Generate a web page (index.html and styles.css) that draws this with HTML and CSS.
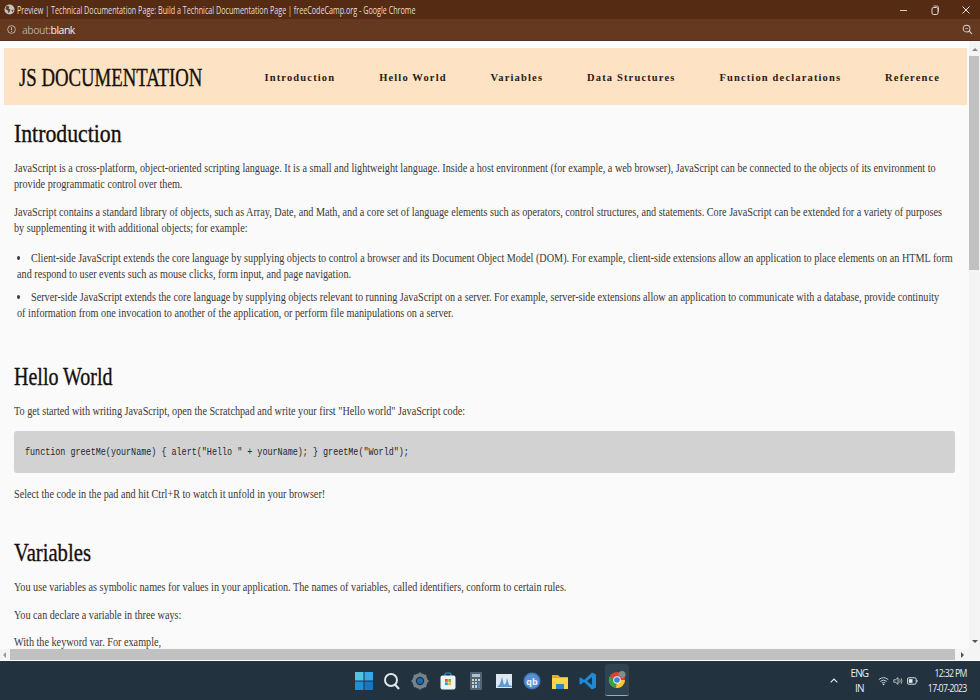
FILE: index.html
```html
<!DOCTYPE html>
<html lang="en">
<head>
<meta charset="utf-8">
<title>Preview</title>
<link rel="stylesheet" href="styles.css">
</head>
<body>
<div class="window">
  <div class="titlebar">
    <svg class="globe" viewBox="0 0 12 12" width="11" height="11"><circle cx="6" cy="6" r="5.5" fill="#c9c3bf"/><path d="M3 1.5l3 1.5-1 2 2 1-1 2.5-1 1.500-1-3-2.500-1.500zM8 7l2.500-1-1 3z" fill="#5a4030"/></svg>
    <span class="title"><span class="title-text">Preview | Technical Documentation Page: Build a Technical Documentation Page | freeCodeCamp.org - Google Chrome</span></span>
    <div class="winctl">
      <svg viewBox="0 0 10 10" width="10" height="10"><path d="M1 5.500h7" stroke="#d8d0ca" stroke-width="1"/></svg>
      <svg viewBox="0 0 10 10" width="10" height="10"><rect x="2" y="2.500" width="6" height="7" rx="1.500" fill="none" stroke="#e2dbd6"/><path d="M3.500 1h3.500q1.500 0 1.500 1.500v4" fill="none" stroke="#e2dbd6" stroke-width=".8"/></svg>
      <svg viewBox="0 0 10 10" width="10" height="10"><path d="M1.500 1.500l7 7M8.500 1.500l-7 7" stroke="#ece6e2" stroke-width="1"/></svg>
    </div>
  </div>
  <div class="addressbar">
    <svg viewBox="0 0 10 10" width="9" height="9"><circle cx="5" cy="5" r="4.300" fill="none" stroke="#cfc4bc" stroke-width=".9"/><path d="M5 2.500v3.300M5 6.800v1" stroke="#cfc4bc" stroke-width="1"/></svg>
    <span class="url"><span class="scheme">about:</span>blank</span>
    <svg class="zoomicon" viewBox="0 0 12 12" width="11" height="11"><circle cx="5" cy="5" r="3.700" fill="none" stroke="#d8cfc8" stroke-width="1.100"/><path d="M7.800 7.800l3 3" stroke="#d8cfc8" stroke-width="1.300"/><path d="M3.500 5h3" stroke="#d8cfc8" stroke-width=".8"/></svg>
  </div>

  <div class="viewport">
    <div class="page">
      <header class="topnav">
        <h1 class="logo"><span class="squeeze">JS DOCUMENTATION</span></h1>
        <nav class="links">
          <a>Introduction</a><a>Hello World</a><a>Variables</a><a>Data Structures</a><a>Function declarations</a><a>Reference</a>
        </nav>
      </header>
      <main class="doc">
        <section class="sec">
          <h2><span class="squeeze h-intro">Introduction</span></h2>
          <p>JavaScript is a cross-platform, object-oriented scripting language. It is a small and lightweight language. Inside a host environment (for example, a web browser), JavaScript can be connected to the objects of its environment to<br>provide programmatic control over them.</p>
          <p>JavaScript contains a standard library of objects, such as Array, Date, and Math, and a core set of language elements such as operators, control structures, and statements. Core JavaScript can be extended for a variety of purposes<br>by supplementing it with additional objects; for example:</p>
          <ul>
            <li>Client-side JavaScript extends the core language by supplying objects to control a browser and its Document Object Model (DOM). For example, client-side extensions allow an application to place elements on an HTML form<br>and respond to user events such as mouse clicks, form input, and page navigation.</li>
            <li>Server-side JavaScript extends the core language by supplying objects relevant to running JavaScript on a server. For example, server-side extensions allow an application to communicate with a database, provide continuity<br>of information from one invocation to another of the application, or perform file manipulations on a server.</li>
          </ul>
        </section>
        <section class="sec">
          <h2><span class="squeeze h-hello">Hello World</span></h2>
          <p>To get started with writing JavaScript, open the Scratchpad and write your first "Hello world" JavaScript code:</p>
          <pre class="code"><code>function greetMe(yourName) { alert("Hello " + yourName); } greetMe("World");</code></pre>
          <p>Select the code in the pad and hit Ctrl+R to watch it unfold in your browser!</p>
        </section>
        <section class="sec">
          <h2><span class="squeeze h-vars">Variables</span></h2>
          <p>You use variables as symbolic names for values in your application. The names of variables, called identifiers, conform to certain rules.</p>
          <p>You can declare a variable in three ways:</p>
          <p class="last">With the keyword var. For example,</p>
        </section>
      </main>
    </div>
    <div class="vscroll">
      <span class="arrow-up"></span>
      <div class="vtrack"><div class="vthumb"></div></div>
      <span class="arrow-down"></span>
    </div>
    <div class="hscroll">
      <span class="arrow-left"></span>
      <div class="hthumb"></div>
      <span class="arrow-right"></span>
    </div>
    <div class="corner"></div>
  </div>

  <footer class="taskbar">
    <div class="apps">
      <svg viewBox="0 0 18 18" width="18" height="18"><rect x="0" y="0" width="8.500" height="8.500" fill="#4fc3ee"/><rect x="9.500" y="0" width="8.500" height="8.500" fill="#35a9e6"/><rect x="0" y="9.500" width="8.500" height="8.500" fill="#1d8fd8"/><rect x="9.500" y="9.500" width="8.500" height="8.500" fill="#1477c4"/></svg>
      <svg viewBox="0 0 18 18" width="18" height="18"><circle cx="8" cy="8" r="6" fill="none" stroke="#dfe5e8" stroke-width="2"/><path d="M12 12.500l4 4.500" stroke="#dfe5e8" stroke-width="2.200"/></svg>
      <svg viewBox="0 0 18 18" width="18" height="18"><circle cx="9" cy="9" r="6" fill="none" stroke="#77828a" stroke-width="3.600"/><path d="M9 .5v3M9 14.500v3M.5 9h3M14.500 9h3M3 3l2 2M13 13l2 2M15 3l-2 2M5 13l-2 2" stroke="#77828a" stroke-width="2.200"/><circle cx="9" cy="9" r="3" fill="#1668b0"/></svg>
      <svg viewBox="0 0 18 18" width="18" height="18"><path d="M6 4V2.500q0-1.500 1.500-1.500h3q1.500 0 1.500 1.500V4" fill="none" stroke="#2f9bd6" stroke-width="1.200"/><rect x="1.500" y="3.500" width="15" height="14" rx="2" fill="#eef3f5"/><rect x="6" y="7" width="2.800" height="2.800" fill="#e8542c"/><rect x="9.300" y="7" width="2.800" height="2.800" fill="#7fb42a"/><rect x="6" y="10.300" width="2.800" height="2.800" fill="#2c9be0"/><rect x="9.300" y="10.300" width="2.800" height="2.800" fill="#f5b61c"/></svg>
      <svg viewBox="0 0 18 18" width="18" height="18"><rect x="3" y="0" width="12" height="18" rx="1" fill="#55646e"/><rect x="5" y="2" width="8" height="3" fill="#a8c4d2"/><path d="M5 7h2v2H5zM8 7h2v2H8zM11 7h2v2h-2zM5 10h2v2H5zM8 10h2v2H8zM11 10h2v2h-2zM5 13h2v3H5zM8 13h2v3H8z" fill="#c6d0d6"/><path d="M11 10h2v6h-2z" fill="#3d8fc6"/></svg>
      <svg viewBox="0 0 18 18" width="18" height="18"><rect x="1" y="2" width="16" height="14" fill="#dde8f0"/><path d="M2 15l3-3 2-7 2 8 2-2 1-5 2 7 3 1v1z" fill="#5b9bd0"/></svg>
      <svg viewBox="0 0 18 18" width="18" height="18"><circle cx="9" cy="9" r="8.500" fill="#3f78c4"/><circle cx="9" cy="9" r="7" fill="#5a90d4"/><text x="9" y="12.500" class="qb">qb</text></svg>
      <svg viewBox="0 0 18 18" width="18" height="18"><path d="M1 3h6l2 2h8v3H1z" fill="#e5a81e"/><rect x="1" y="6" width="16" height="11" fill="#fbd44a"/><rect x="5" y="12" width="8" height="5" fill="#2e86c8"/></svg>
      <svg viewBox="0 0 18 18" width="18" height="18"><path d="M13 .5l4 2v13l-4 2-8-7.500-3.200 2.500L.5 12V6l1.300-.5L5 8z" fill="#1c8ad6"/><path d="M13 5l-5 4 5 4z" fill="#22333f"/></svg>
      <div class="active-app">
        <svg viewBox="0 0 18 18" width="18" height="18"><circle cx="9" cy="9" r="8" fill="#e0402f"/><path d="M9 9L1.500 5.500A8 8 0 0 0 8 17z" fill="#3aa04a"/><path d="M9 9h8a8 8 0 0 1-9 8z" fill="#f7c92f"/><circle cx="9" cy="9" r="3.800" fill="#eef3f7"/><circle cx="9" cy="9" r="2.800" fill="#3b82e0"/><circle cx="14" cy="3.500" r="3.500" fill="#8a8a8a"/></svg>
      </div>
    </div>
    <div class="tray">
      <svg class="chev" viewBox="0 0 8 5" width="8" height="5"><path d="M.7 4.300L4 1l3.300 3.300" fill="none" stroke="#e8edf0" stroke-width="1.100"/></svg>
      <div class="lang">ENG<br>IN</div>
      <div class="status">
        <svg viewBox="0 0 12 10" width="11" height="10"><path d="M.8 3.500q5.200-4.300 10.400 0M2.500 5.400q3.500-2.800 7 0M4.200 7.200q1.800-1.300 3.600 0" fill="none" stroke="#e8edf0" stroke-width=".9"/><circle cx="6" cy="8.800" r=".9" fill="#e8edf0"/></svg>
        <svg viewBox="0 0 12 10" width="10" height="10"><path d="M1 3.500h2L6 1v8L3 6.500H1z" fill="none" stroke="#e8edf0" stroke-width=".9"/><path d="M8 3q1.200 2 0 4M9.800 1.800q2 3.200 0 6.400" fill="none" stroke="#e8edf0" stroke-width=".8"/></svg>
        <svg viewBox="0 0 12 10" width="11" height="10"><rect x=".5" y="1.500" width="9.500" height="7" rx="1.500" fill="none" stroke="#e8edf0"/><rect x="2" y="3" width="4" height="4" fill="#e8edf0"/><path d="M11 4v2" stroke="#e8edf0"/></svg>
      </div>
      <div class="clock">12:32 PM<br>17-07-2023</div>
    </div>
  </footer>
</div>
</body>
</html>
```
FILE: styles.css
```css
* { box-sizing: border-box; }
html, body { margin: 0; height: 100%; overflow: hidden; }
body { font-family: "Liberation Serif", serif; background: #fff; }

.window { width: 980px; height: 700px; display: flex; flex-direction: column; }

.titlebar {
  height: 19px; flex: none; background: #552b13; color: #e6dfda;
  display: flex; align-items: center; padding: 0 9px 0 4px; gap: 2px;
  font: 10px "Open Sans", sans-serif;
}
.globe { flex: none; }
.title { flex: 1; white-space: nowrap; min-width: 0; }
.title-text { display: inline-block; transform: scaleX(.718); transform-origin: left center; }
.winctl { display: flex; gap: 21px; }

.addressbar {
  height: 22px; flex: none; background: #653820;
  display: flex; align-items: center; padding: 0 7px;
  border-bottom: 1px solid #5a2f18;
  font: 10.500px "Open Sans", sans-serif; color: #f3eeea;
}
.url { flex: 1; margin-left: 6px; letter-spacing: -.5px; }
.scheme { color: #b7a79b; }

.viewport {
  flex: 1; min-height: 0; background: #fff;
  display: grid; grid-template-columns: 1fr 11px; grid-template-rows: 1fr 11px 1px;
}
.page {
  overflow: hidden; padding-top: 7px; grid-column: 1; grid-row: 1;
  background: linear-gradient(#fff 7px, #fafafa 7px);
}

.topnav {
  height: 57px; margin: 0 2px 0 4px; background: #fde2c3;
  display: flex; align-items: center; justify-content: space-between;
  padding: 2px 28px 0 15px;
}
.logo { margin: 0; font-size: 25px; font-weight: 400; color: #15100c; white-space: nowrap; line-height: 1; width: 183px; }
.squeeze { display: inline-block; transform-origin: left center; -webkit-text-stroke: .35px currentColor; }
.logo .squeeze { transform: scaleX(.75); }

.links { display: flex; gap: 45px; }
.links a {
  font-size: 10.500px; font-weight: 700; letter-spacing: 1.150px; color: #2a2019; white-space: nowrap;
  margin-right: -1.150px;
}

.doc { padding: 0 0 0 14px; color: #3c3835; font-size: 13.500px; line-height: 16px; white-space: nowrap; }
h2 { margin: 14px 0 0; font-size: 25px; font-weight: 400; line-height: 30px; color: #15100c; }
.h-intro { transform: scaleX(.87); }
.h-hello { transform: scaleX(.8); }
.h-vars { transform: scaleX(.827); }
.sec p, ul { transform: scaleX(.755); transform-origin: left center; }
.sec p { margin: 12px 0 0; }
.sec h2 + p { margin-top: 11px; }
.sec p.last { margin-top: 11px; }
ul { margin: 14px 0 0; padding: 0 0 0 4px; list-style-position: inside; }
li { margin-bottom: 7px; }
.sec:nth-child(2) { margin-top: 41px; }
.sec:nth-child(3) { margin-top: 36px; }
.sec .code + p { margin-top: 13px; }
.code {
  margin: 12px 0 0; width: 941px; height: 42px; background: #d2d2d2; border-radius: 3px;
  padding: 0 11px; display: flex; align-items: center;
  font: 11.500px/1 "Liberation Mono", monospace; color: #22262a;
}
.code code { font: inherit; display: inline-block; transform: scaleX(.732); transform-origin: left center; }

.vscroll { grid-column: 2; grid-row: 1; background: #f4f4f4; display: flex; flex-direction: column; align-items: center; }
.arrow-up, .arrow-down { flex: none; width: 0; height: 0; border: 3px solid transparent; }
.arrow-up { border-bottom-color: #8a8a8a; border-top-width: 0; margin: 7px 0 5px; }
.arrow-down { border-top-color: #505050; border-bottom-width: 0; margin: 5px 0 6px; }
.vtrack { flex: 1; width: 100%; }
.vthumb { height: 214px; margin: 0 1px 0 0; background: #c1c1c1; }

.hscroll { grid-column: 1; grid-row: 2; background: #f4f4f4; display: flex; align-items: center; }
.arrow-left, .arrow-right { flex: none; width: 0; height: 0; border: 3px solid transparent; }
.arrow-left { border-right-color: #9a9a9a; border-left-width: 0; margin: 0 4px 0 3px; }
.arrow-right { border-left-color: #505050; border-right-width: 0; margin: 0 5px 0 0; }
.hthumb { flex: 1; height: 100%; background: #c1c1c1; margin-right: 6px; }
.corner { grid-column: 2; grid-row: 2; background: #f4f4f4; }

.taskbar {
  height: 39px; flex: none; background: #22333f; color: #e8edf0;
  display: grid; grid-template-columns: 1fr auto; align-items: center; padding: 0 13px 0 355px;
}
.apps { display: flex; align-items: center; gap: 10px; }
.active-app {
  width: 24px; height: 34px; margin-left: -2px; background: #2f4350; border-radius: 3px;
  display: flex; align-items: center; justify-content: center;
  border-bottom: 2px solid #22333f; box-shadow: inset 0 -2px 0 -1px #8fb0c4;
}
.qb { font: 700 9px "Open Sans", sans-serif; fill: #eaf1f8; text-anchor: middle; }
.tray { display: flex; align-items: center; font: 10px/15px "Open Sans", sans-serif; }
.chev { margin-right: 12px; }
.lang { text-align: center; width: 18px; letter-spacing: -.9px; }
.status { display: flex; gap: 4px; margin: 0 4px 0 10px; align-items: center; }
.clock { text-align: right; letter-spacing: -.75px; transform: scaleX(.87); transform-origin: right center; }
```
